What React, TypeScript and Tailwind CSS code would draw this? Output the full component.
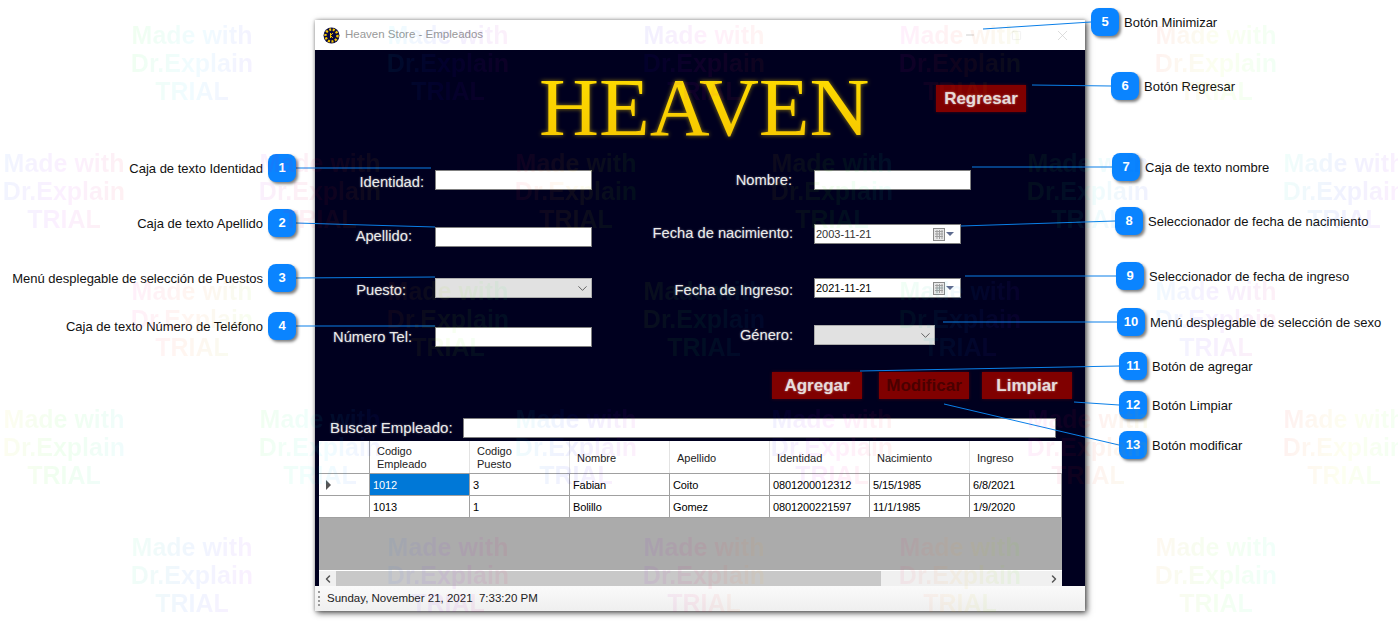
import { Minus, Square, X, ChevronDown, ChevronLeft, ChevronRight } from 'lucide-react';

// Callouts of the annotated screenshot: badge position, label, leader line end
const callouts = [
  { n: 1, x: 269, y: 154, label: 'Caja de texto Identidad', side: 'left', to: [431, 168] },
  { n: 2, x: 269, y: 209, label: 'Caja de texto Apellido', side: 'left', to: [435, 227] },
  { n: 3, x: 269, y: 264, label: 'Menú desplegable de selección de Puestos', side: 'left', to: [435, 277] },
  { n: 4, x: 269, y: 312, label: 'Caja de texto Número de Teléfono', side: 'left', to: [435, 326] },
  { n: 5, x: 1091, y: 8, label: 'Botón Minimizar', side: 'right', to: [983, 29] },
  { n: 6, x: 1111, y: 72, label: 'Botón Regresar', side: 'right', to: [1032, 85] },
  { n: 7, x: 1112, y: 153, label: 'Caja de texto nombre', side: 'right', to: [972, 167] },
  { n: 8, x: 1115, y: 207, label: 'Seleccionador de fecha de nacimiento', side: 'right', to: [961, 226] },
  { n: 9, x: 1116, y: 262, label: 'Seleccionador de fecha de ingreso', side: 'right', to: [965, 276] },
  { n: 10, x: 1117, y: 308, label: 'Menú desplegable de selección de sexo', side: 'right', to: [943, 322] },
  { n: 11, x: 1119, y: 352, label: 'Botón de agregar', side: 'right', to: [860, 371] },
  { n: 12, x: 1119, y: 391, label: 'Botón Limpiar', side: 'right', to: [1074, 402] },
  { n: 13, x: 1119, y: 431, label: 'Botón modificar', side: 'right', to: [944, 404] },
];

// Trial watermark tiles, staggered every other row
const watermarks: { cx: number; top: number; hue: number }[] = [];
for (let r = 0; r < 5; r++) {
  for (let k = 0; k < 6; k++) {
    const cx = (r % 2 === 0 ? 192 : 64) + k * 256;
    if (cx < 1398) watermarks.push({ cx, top: 21 + r * 128, hue: (r * 97 + k * 61 + 120) % 360 });
  }
}

const rows = [
  ['1012', '3', 'Fabian', 'Coito', '0801200012312', '5/15/1985', '6/8/2021'],
  ['1013', '1', 'Bolillo', 'Gomez', '0801200221597', '11/1/1985', '1/9/2020'],
];

const headers = ['Codigo\nEmpleado', 'Codigo\nPuesto', 'Nombre', 'Apellido', 'Identidad', 'Nacimiento', 'Ingreso'];

function Field({ label, width, pr, className, children }: any) {
  return (
    <div className={`flex items-center ${className ?? ''}`}>
      <div
        className={`${width} ${pr} text-right text-[14.7px] leading-5 text-[#ececec] whitespace-nowrap [text-shadow:0_0_2px_#ffffff70]`}
      >
        {label}
      </div>
      {children}
    </div>
  );
}

function TextBox({ className }: { className?: string }) {
  return <div className={`h-5 bg-white border border-[#808080] ${className ?? 'w-[157px]'}`} />;
}

function Combo({ className }: { className: string }) {
  return (
    <div className={`h-5 flex items-center justify-end pr-px bg-[#e1e1e1] border border-[#adadad] ${className}`}>
      <ChevronDown size={15} strokeWidth={1.3} className="text-[#444]" />
    </div>
  );
}

function DatePicker({ value, dim }: { value: string; dim?: boolean }) {
  return (
    <div className="w-[147px] h-5 flex items-center bg-white border border-[#808080] pl-px pr-[6px] text-[11px] text-black">
      <span className={dim ? 'text-[#333]' : ''}>{value}</span>
      <svg width="21" height="13" viewBox="0 0 21 13" className="ml-auto">
        <rect x="0.5" y="0.5" width="11" height="12" fill="#e8e8e8" stroke="#8a8a8a" />
        <path d="M2 3.5h8M2 6h8M2 8.5h8M4 2v9M6.5 2v9M9 2v9" stroke="#a0a0a0" strokeWidth="1" />
        <path d="M13 4h8l-4 4z" fill="#5d6b8f" />
      </svg>
    </div>
  );
}

function ActionButton({ label, dark, className }: { label: string; dark?: boolean; className?: string }) {
  return (
    <button
      className={`w-[90px] h-[27px] bg-[#800000] text-[17px] font-bold flex items-center justify-center shadow-[0_0_3px_#80000090] ${
        dark ? 'text-[#4a0000]' : 'text-[#e6dcdc] [text-shadow:0_0_2px_#ffffff80]'
      } ${className ?? ''}`}
    >
      {label}
    </button>
  );
}

function AppIcon() {
  return (
    <svg width="17" height="17" viewBox="0 0 17 17" className="shrink-0">
      <circle cx="8.5" cy="8.5" r="8" fill="#0a0a40" />
      <circle cx="8.5" cy="8.5" r="6" fill="none" stroke="#f5c800" strokeWidth="2.4" strokeDasharray="2 1.6" />
      <circle cx="8.5" cy="8.5" r="3.4" fill="#0a0a40" />
      <path d="M7.5 6v5M7.5 8.5l2.4-2.5M7.5 8.5l2.4 2.5" stroke="#f5c800" strokeWidth="1" fill="none" />
    </svg>
  );
}

function EmployeeGrid() {
  return (
    <div className="w-[743px] h-[145px] ml-1 mt-[3px] flex flex-col bg-[#ababab] text-[11px] text-black overflow-hidden">
      <div className="grid grid-cols-[51px_100px_100px_100px_100px_100px_100px_92px] h-[33px] bg-white border-b border-[#a0a0a0]">
        <div className="border-r border-[#a0a0a0]" />
        {headers.map((h) => (
          <div
            key={h}
            className="flex items-center pl-[7px] pr-1 pt-[2px] leading-[13px] whitespace-pre-line text-[#222] border-r border-[#e3e3e3]"
          >
            {h}
          </div>
        ))}
      </div>
      {rows.map((row, i) => (
        <div
          key={row[0]}
          className="grid grid-cols-[51px_100px_100px_100px_100px_100px_100px_92px] h-[22px] bg-white border-b border-[#a0a0a0]"
        >
          <div className="flex items-center pl-[7px] border-r border-[#a0a0a0]">
            {i === 0 && <div className="w-0 h-0 border-y-[5px] border-y-transparent border-l-[5px] border-l-[#555]" />}
          </div>
          {row.map((cell, j) => (
            <div
              key={j}
              className={`flex items-center pl-[3px] pt-[2px] tracking-[-0.1px] border-r border-[#a0a0a0] ${
                i === 0 && j === 0 ? 'bg-[#0078d7] text-white' : ''
              }`}
            >
              {cell}
            </div>
          ))}
        </div>
      ))}
      <div className="flex-1" />
      <div className="h-[15px] flex items-stretch bg-[#f0f0f0] border-t border-white box-content">
        <div className="w-[17px] flex items-center justify-center">
          <ChevronLeft size={12} strokeWidth={3} className="text-[#555]" />
        </div>
        <div className="w-[545px] bg-[#c8c8c8]" />
        <div className="flex-1" />
        <div className="w-4 flex items-center justify-center">
          <ChevronRight size={12} strokeWidth={3} className="text-[#555]" />
        </div>
      </div>
    </div>
  );
}

function EmployeeWindow() {
  return (
    <div className="absolute left-[315px] top-[20px] w-[770px] h-[591px] flex flex-col shadow-[2px_2px_6px_#000000b0,0_0_3px_#00000040]">
      {/* Title bar */}
      <div className="h-[30px] shrink-0 flex items-center bg-white pl-2 text-[11.5px] text-[#999]">
        <AppIcon />
        <span className="ml-[5px]">Heaven Store - Empleados</span>
        <div className="ml-auto flex items-center">
          <div className="w-[46px] flex justify-center"><Minus size={12} strokeWidth={1} className="text-[#999]" /></div>
          <div className="w-[46px] flex justify-center"><Square size={11} strokeWidth={1} className="text-[#e0e0e0]" /></div>
          <div className="w-[46px] flex justify-center"><X size={17} strokeWidth={1} className="text-[#cfcfcf]" /></div>
        </div>
      </div>

      {/* Form body */}
      <div className="flex-1 flex flex-col bg-[#00001f] min-h-0">
        <div className="h-[120px] shrink-0 flex items-start">
          <h1 className="ml-[224px] mt-[9px] w-[330px] font-['Liberation_Serif',serif] text-[83px] leading-[96px] whitespace-nowrap bg-gradient-to-b from-[#ffe000] to-[#f5c400] bg-clip-text text-transparent [filter:drop-shadow(0_0_2px_#ffd70090)]">
            HEAVEN
          </h1>
          <ActionButton label="Regresar" className="ml-[67px] mt-[35px]" />
        </div>

        <div className="h-[177px] shrink-0 flex">
          <div className="w-[325px] flex flex-col">
            <Field label="Identidad:" width="w-[120px]" pr="pr-[11px] translate-y-[2px]"><TextBox /></Field>
            <Field label="Apellido:" width="w-[120px]" pr="pr-[23px] -translate-y-[1px]" className="mt-[37px]"><TextBox /></Field>
            <Field label="Puesto:" width="w-[120px]" pr="pr-[29px] translate-y-[2px]" className="mt-[31px]"><Combo className="w-[157px]" /></Field>
            <Field label="Número Tel:" width="w-[120px]" pr="pr-[23px]" className="mt-[29px]"><TextBox /></Field>
          </div>
          <div className="flex flex-col">
            <Field label="Nombre:" width="w-[174px]" pr="pr-[22px]"><TextBox /></Field>
            <Field label="Fecha de nacimiento:" width="w-[174px]" pr="pr-[21px] -translate-y-[1px]" className="mt-[34px]"><DatePicker value="2003-11-21" dim /></Field>
            <Field label="Fecha de Ingreso:" width="w-[174px]" pr="pr-[21px] translate-y-[2px]" className="mt-[34px]"><DatePicker value="2021-11-21" /></Field>
            <Field label="Género:" width="w-[174px]" pr="pr-[21px]" className="mt-[27px]"><Combo className="w-[121px]" /></Field>
          </div>
        </div>

        <div className="mt-[25px] ml-[457px] flex">
          <ActionButton label="Agregar" />
          <ActionButton label="Modificar" dark className="ml-[17px]" />
          <ActionButton label="Limpiar" className="ml-[13px]" />
        </div>

        <div className="mt-[19px] ml-[15px] flex items-center">
          <span className="w-[133px] text-[15px] leading-5 text-[#ececec] [text-shadow:0_0_2px_#ffffff70]">Buscar Empleado:</span>
          <div className="w-[593px] h-5 bg-white border border-[#808080]" />
        </div>

        <EmployeeGrid />
      </div>

      {/* Status strip */}
      <div className="h-[25px] shrink-0 flex items-center bg-gradient-to-b from-[#fafafa] to-[#efefef] rounded-tr-[3px] pl-[3px] text-[11.5px] text-[#222]">
        <div className="w-[2px] h-[15px] border-l-2 border-dotted border-[#999]" />
        <span className="ml-[7px] whitespace-pre">Sunday, November 21, 2021  7:33:20 PM</span>
      </div>
    </div>
  );
}

export default function App() {
  return (
    <div className="relative w-[1398px] h-[621px] overflow-hidden bg-white font-['Liberation_Sans',Arial,sans-serif]">
      <EmployeeWindow />

      {/* Leader lines */}
      <svg width="1398" height="621" className="absolute left-0 top-0">
        {callouts.map((c) => (
          <line
            key={c.n}
            x1={c.side === 'left' ? c.x + 27 : c.x}
            y1={c.y + 14}
            x2={c.to[0]}
            y2={c.to[1]}
            stroke="#0a7fe8"
            strokeWidth="1"
          />
        ))}
      </svg>

      {callouts.map((c) => (
        <div
          key={c.n}
          className={`absolute flex items-center h-7 whitespace-nowrap text-[13px] text-[#111] ${
            c.side === 'left' ? 'flex-row-reverse' : ''
          }`}
          style={c.side === 'left' ? { right: 1398 - c.x - 27, top: c.y } : { left: c.x, top: c.y }}
        >
          <div className="w-7 h-7 shrink-0 flex items-center justify-center rounded-lg bg-[#0a84ff] text-white text-[13px] font-bold shadow-[2px_2px_3px_#00000080]">
            {c.n}
          </div>
          <span className={`pt-[1px] ${c.side === 'left' ? 'mr-[5px]' : 'ml-[5px]'}`}>{c.label}</span>
        </div>
      ))}

      {/* Trial watermark over the whole picture */}
      {watermarks.map((w, i) => (
        <div
          key={i}
          className="absolute w-[126px] -ml-[63px] text-center text-[25px] font-bold leading-[28px] whitespace-nowrap bg-clip-text text-transparent opacity-[0.055] pointer-events-none"
          style={{
            left: w.cx,
            top: w.top,
            backgroundImage: `linear-gradient(100deg, hsl(${w.hue} 100% 50%), hsl(${w.hue + 70} 100% 50%), hsl(${w.hue + 140} 100% 50%))`,
          }}
        >
          <div>Made with</div>
          <div>Dr.Explain</div>
          <div>TRIAL</div>
        </div>
      ))}
    </div>
  );
}
